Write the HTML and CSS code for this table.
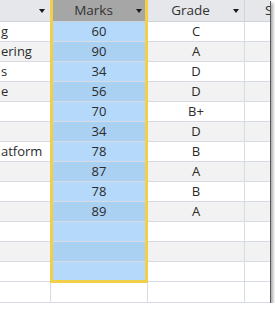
FILE: index.html
```html
<!DOCTYPE html>
<html>
<head>
<meta charset="utf-8">
<link rel="stylesheet" href="styles.css">
</head>
<body>
<div class="frame">
  <div class="grid">
    <div class="hd c1"><span class="lbl"></span><span class="arrow"></span></div>
    <div class="hd c2 sel"><span class="lbl">Marks</span><span class="arrow"></span></div>
    <div class="hd c3"><span class="lbl">Grade</span><span class="arrow"></span></div>
    <div class="hd c4"><span class="lbl4">S</span></div>

    <div class="c1 odd txt">g</div><div class="c2 m odd">60</div><div class="c3 odd">C</div><div class="c4 odd"></div>
    <div class="c1 even txt">ering</div><div class="c2 m even">90</div><div class="c3 even">A</div><div class="c4 even"></div>
    <div class="c1 odd txt">s</div><div class="c2 m odd">34</div><div class="c3 odd">D</div><div class="c4 odd"></div>
    <div class="c1 even txt">e</div><div class="c2 m even">56</div><div class="c3 even">D</div><div class="c4 even"></div>
    <div class="c1 odd txt"></div><div class="c2 m odd">70</div><div class="c3 odd">B+</div><div class="c4 odd"></div>
    <div class="c1 even txt"></div><div class="c2 m even">34</div><div class="c3 even">D</div><div class="c4 even"></div>
    <div class="c1 odd txt">atform</div><div class="c2 m odd">78</div><div class="c3 odd">B</div><div class="c4 odd"></div>
    <div class="c1 even txt"></div><div class="c2 m even">87</div><div class="c3 even">A</div><div class="c4 even"></div>
    <div class="c1 odd txt"></div><div class="c2 m odd">78</div><div class="c3 odd">B</div><div class="c4 odd"></div>
    <div class="c1 even txt"></div><div class="c2 m even">89</div><div class="c3 even">A</div><div class="c4 even"></div>
    <div class="c1 odd"></div><div class="c2 m odd"></div><div class="c3 odd"></div><div class="c4 odd"></div>
    <div class="c1 even"></div><div class="c2 m even"></div><div class="c3 even"></div><div class="c4 even"></div>
    <div class="c1 odd"></div><div class="c2 m odd"></div><div class="c3 odd"></div><div class="c4 odd"></div>
    <div class="c1 odd"></div><div class="c2 odd"></div><div class="c3 odd"></div><div class="c4 odd"></div>
  </div>
  <div class="selection"></div>
</div>
</body>
</html>
```

FILE: styles.css
```css
html, body {
  margin: 0;
  padding: 0;
  background: #ffffff;
}

.frame {
  position: relative;
  width: 270px;
  height: 303px;
  overflow: hidden;
  background: #ffffff;
  box-shadow: 1px 1px 0 #5a5a5a, 3px 3px 3px rgba(0, 0, 0, 0.35);
  font-family: "Open Sans", "Noto Sans", sans-serif;
  font-size: 13px;
  color: #2b2b2b;
}

.grid {
  display: grid;
  grid-template-columns: 51px 97px 97px 60px;
  grid-template-rows: 22px repeat(13, 20px) 21px;
}

.grid > div {
  box-sizing: border-box;
  border-right: 1px solid #d6dbe4;
  border-bottom: 1px solid #d6dbe4;
  display: flex;
  align-items: center;
  justify-content: center;
  line-height: 1;
  white-space: nowrap;
  overflow: hidden;
}

.grid > .hd {
  background: #e5e7ea;
  border-bottom-color: #cdd1d8;
  border-right-color: #d0d4da;
  justify-content: flex-start;
}

.grid > .hd.sel {
  background: #a6a6a6;
}

.lbl {
  flex: 1;
  text-align: center;
  font-size: 13.5px;
  color: #333333;
}

.lbl4 {
  padding-left: 20px;
  font-size: 13.5px;
  color: #333333;
}

.arrow {
  width: 0;
  height: 0;
  border-left: 3.5px solid transparent;
  border-right: 3.5px solid transparent;
  border-top: 4px solid #1a1a1a;
  margin-right: 5px;
  margin-top: 1px;
}

.odd { background: #ffffff; }
.even { background: #f2f2f2; }

.grid > .m.odd { background: #b5d9fa; }
.grid > .m.even { background: #aad0f2; }

.grid > .txt {
  justify-content: flex-start;
  padding-left: 1px;
}

.selection {
  position: absolute;
  left: 50px;
  top: -3px;
  width: 98px;
  height: 286px;
  box-sizing: border-box;
  border: 3px solid #f2cf48;
}
```
